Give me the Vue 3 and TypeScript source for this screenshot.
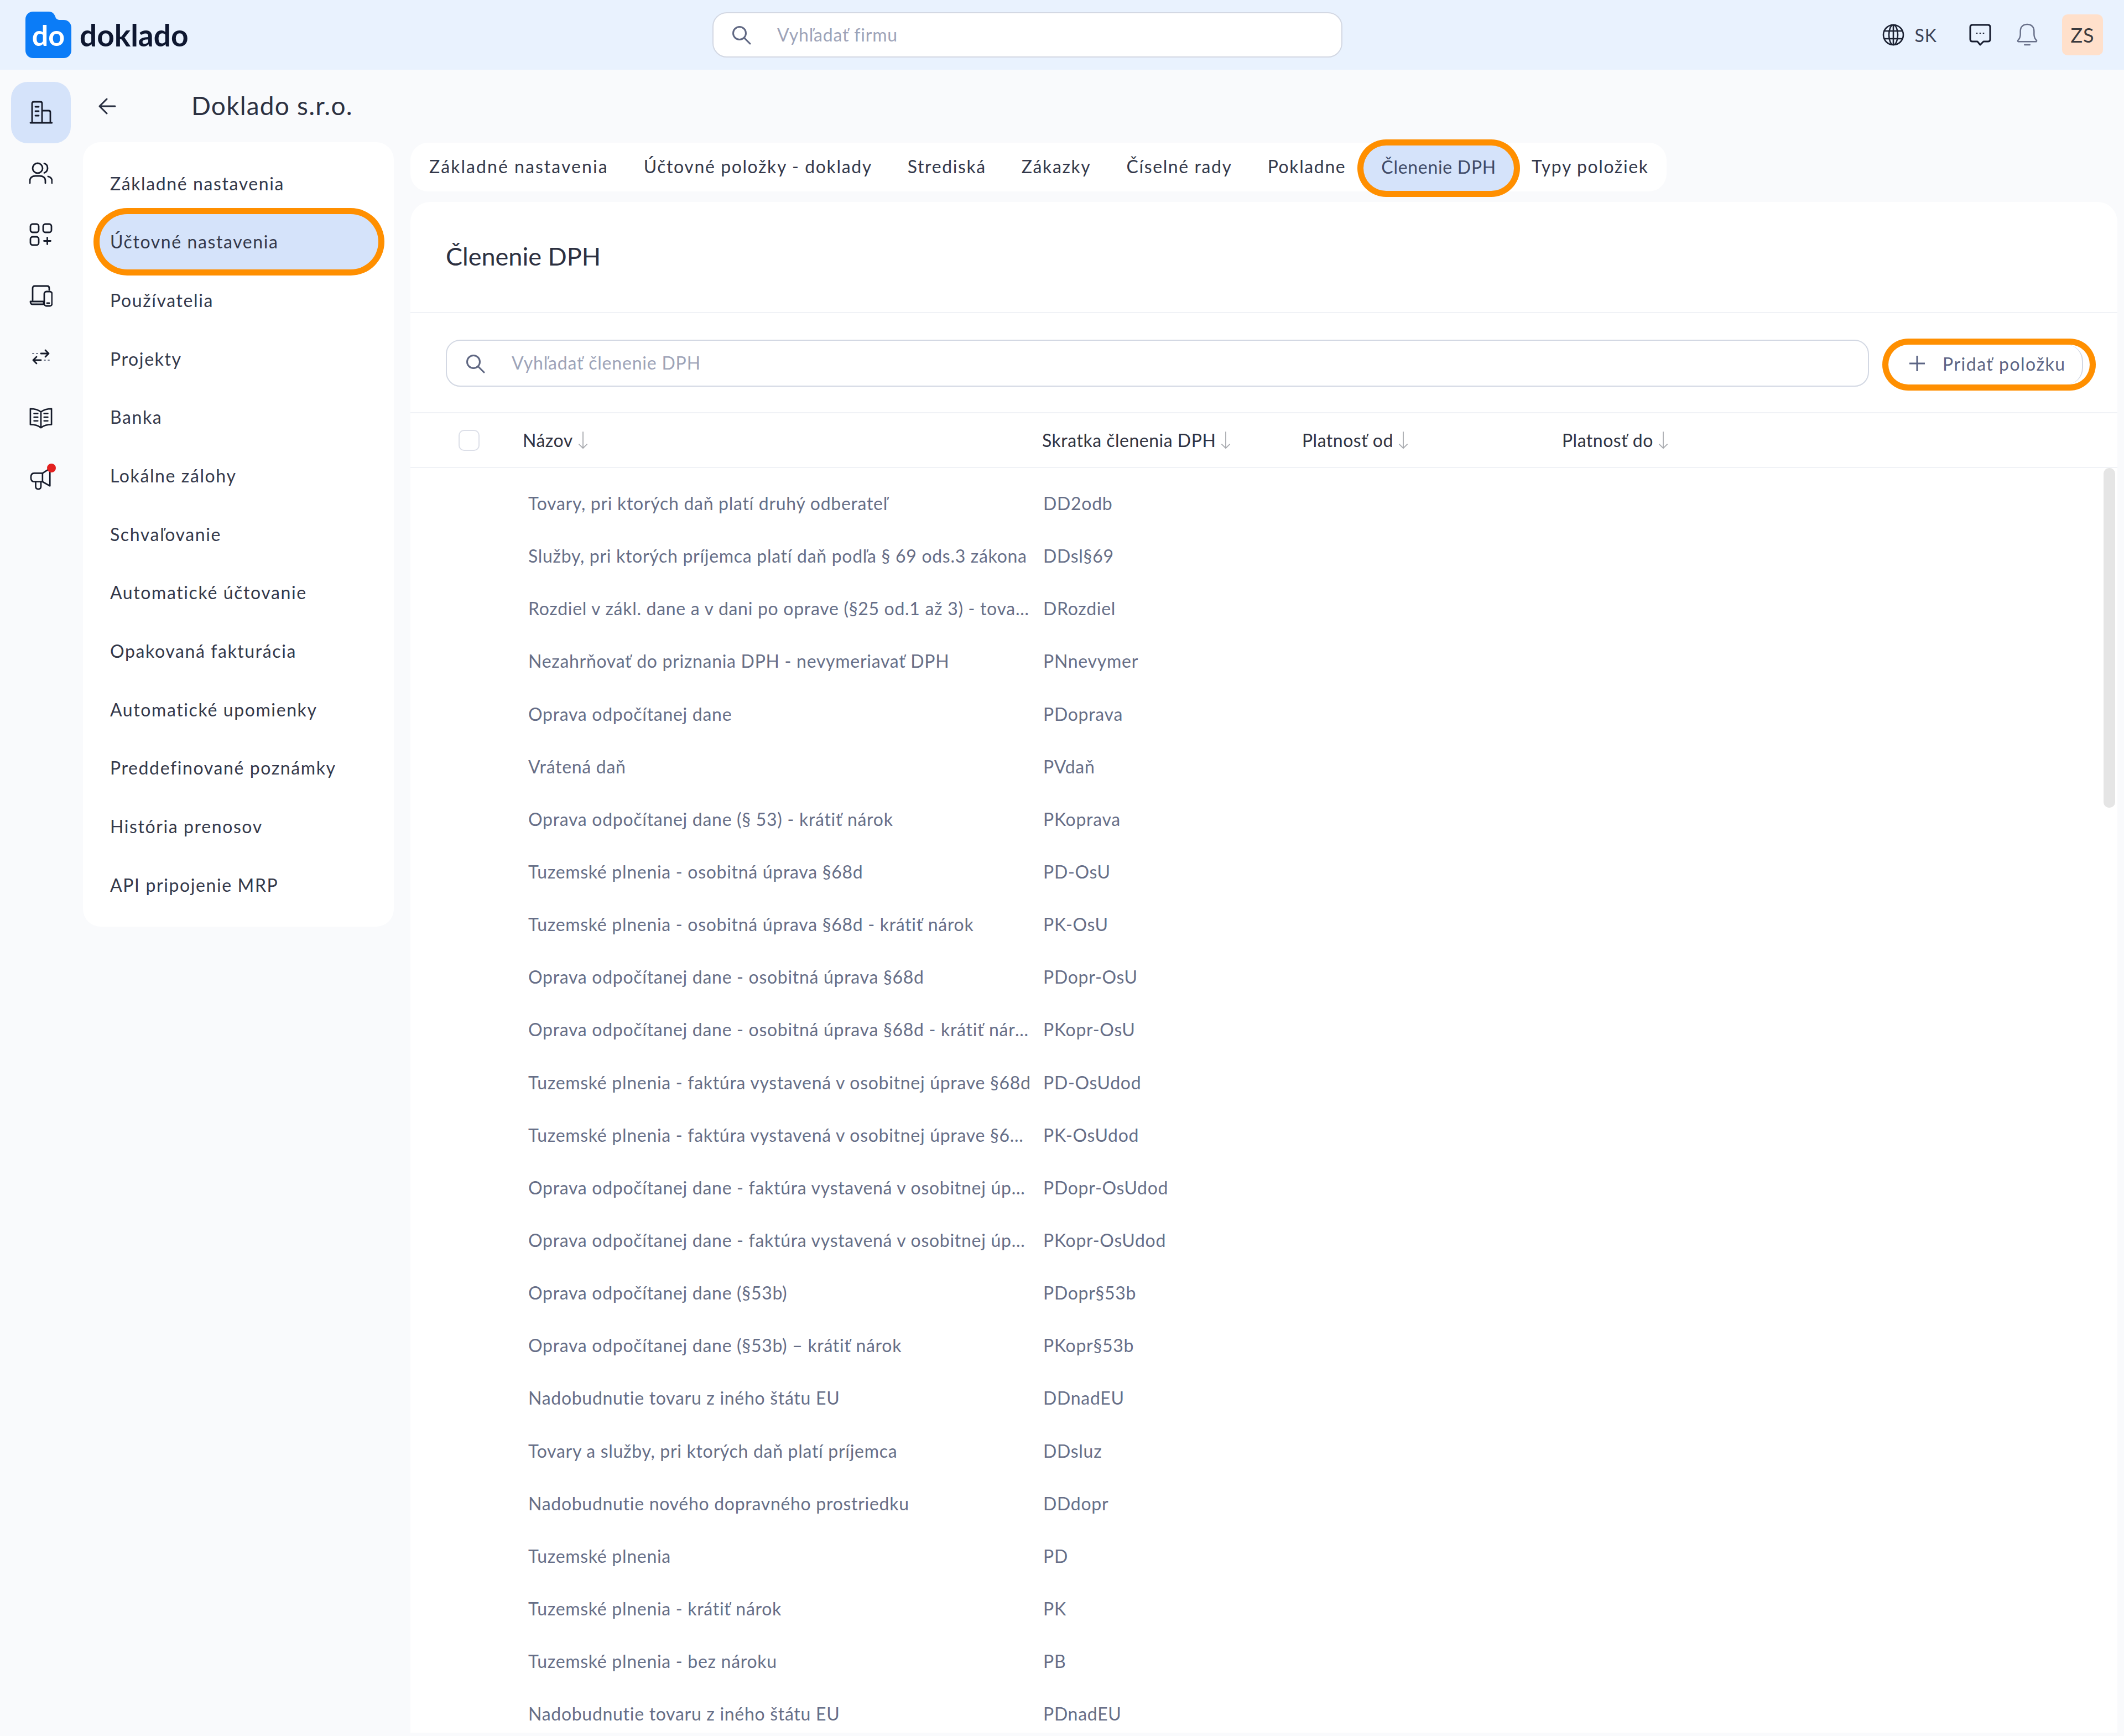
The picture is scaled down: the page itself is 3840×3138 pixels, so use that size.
<script setup lang="ts">
const sideItems = [
  'Základné nastavenia',
  'Účtovné nastavenia',
  'Používatelia',
  'Projekty',
  'Banka',
  'Lokálne zálohy',
  'Schvaľovanie',
  'Automatické účtovanie',
  'Opakovaná fakturácia',
  'Automatické upomienky',
  'Preddefinované poznámky',
  'História prenosov',
  'API pripojenie MRP',
]

const tabs = [
  'Základné nastavenia',
  'Účtovné položky - doklady',
  'Strediská',
  'Zákazky',
  'Číselné rady',
  'Pokladne',
  'Členenie DPH',
  'Typy položiek',
]

const columns = ['Skratka členenia DPH', 'Platnosť od', 'Platnosť do']

const rows: [string, string][] = [
  ['Tovary, pri ktorých daň platí druhý odberateľ', 'DD2odb'],
  ['Služby, pri ktorých príjemca platí daň podľa § 69 ods.3 zákona', 'DDsl§69'],
  ['Rozdiel v zákl. dane a v dani po oprave (§25 od.1 až 3) - tovary a služby', 'DRozdiel'],
  ['Nezahrňovať do priznania DPH - nevymeriavať DPH', 'PNnevymer'],
  ['Oprava odpočítanej dane', 'PDoprava'],
  ['Vrátená daň', 'PVdaň'],
  ['Oprava odpočítanej dane (§ 53) - krátiť nárok', 'PKoprava'],
  ['Tuzemské plnenia - osobitná úprava §68d', 'PD-OsU'],
  ['Tuzemské plnenia - osobitná úprava §68d - krátiť nárok', 'PK-OsU'],
  ['Oprava odpočítanej dane - osobitná úprava §68d', 'PDopr-OsU'],
  ['Oprava odpočítanej dane - osobitná úprava §68d - krátiť nárok', 'PKopr-OsU'],
  ['Tuzemské plnenia - faktúra vystavená v osobitnej úprave §68d', 'PD-OsUdod'],
  ['Tuzemské plnenia - faktúra vystavená v osobitnej úprave §68d - krátiť nárok', 'PK-OsUdod'],
  ['Oprava odpočítanej dane - faktúra vystavená v osobitnej úprave §68d', 'PDopr-OsUdod'],
  ['Oprava odpočítanej dane - faktúra vystavená v osobitnej úprave §68d - krátiť nárok', 'PKopr-OsUdod'],
  ['Oprava odpočítanej dane (§53b)', 'PDopr§53b'],
  ['Oprava odpočítanej dane (§53b) – krátiť nárok', 'PKopr§53b'],
  ['Nadobudnutie tovaru z iného štátu EU', 'DDnadEU'],
  ['Tovary a služby, pri ktorých daň platí príjemca', 'DDsluz'],
  ['Nadobudnutie nového dopravného prostriedku', 'DDdopr'],
  ['Tuzemské plnenia', 'PD'],
  ['Tuzemské plnenia - krátiť nárok', 'PK'],
  ['Tuzemské plnenia - bez nároku', 'PB'],
  ['Nadobudnutie tovaru z iného štátu EU', 'PDnadEU'],
]
</script>

<template>
  <div class="page">
    <header class="topbar">
      <div class="brand">
        <div class="logo">
          <svg class="logo-shape" viewBox="0 0 83 84">
            <path d="M14 0H42C49 0 52 4 54 9C55 13 58 15 63 15H69C77 15 83 21 83 29V70C83 78 77 84 69 84H14C6 84 0 78 0 70V14C0 6 6 0 14 0Z" fill="#0b7cf7" />
          </svg>
          <span class="logo-do">do</span>
        </div>
        <span class="logo-name">doklado</span>
      </div>
      <div class="top-search">
        <svg class="search-icon" viewBox="0 0 36 36">
          <circle cx="15" cy="15" r="11.5" />
          <path d="M23.5 23.5L34 34" />
        </svg>
        <span class="top-placeholder">Vyhľadať firmu</span>
      </div>
      <div class="top-actions">
        <svg class="globe" viewBox="0 0 40 40">
          <circle cx="20" cy="20" r="18" />
          <ellipse cx="20" cy="20" rx="8" ry="18" />
          <path d="M3.5 13H36.5M3.5 27H36.5M20 2V38" />
        </svg>
        <span class="lang">SK</span>
        <svg class="chat" viewBox="0 0 40 40">
          <path d="M6 2H34C36.5 2 38 3.5 38 6V28C38 30.5 36.5 32 34 32H26L20 38L15 32H6C3.5 32 2 30.5 2 28V6C2 3.5 3.5 2 6 2Z" />
          <path class="dots" d="M13.5 17H14.5M19.5 17H20.5M25.5 17H26.5" />
        </svg>
        <svg class="bell" viewBox="0 0 40 44">
          <path d="M2 33C5 30 7 27 7 21V15C7 7 12 2 20 2C28 2 33 7 33 15V21C33 27 35 30 38 33C38 34 37 35 36 35H4C3 35 2 34 2 33Z" />
          <path d="M15 41H25" />
        </svg>
        <div class="avatar">ZS</div>
      </div>
    </header>

    <div class="body">
      <nav class="rail">
        <div class="rail-item rail-active">
          <svg viewBox="0 0 42 42">
            <path d="M2 40H41M5 40V5C5 3 6 2 8 2H20C22 2 23 3 23 5V40M23 18H35C37 18 38 19 38 21V40" />
            <path d="M11 11H17M11 19H17M11 27H17" />
          </svg>
        </div>
        <div class="rail-item">
          <svg viewBox="0 0 42 42">
            <circle cx="15" cy="11" r="9" />
            <path d="M27 2.5C31 3.5 33 7 33 11C33 15 31 18 27 19.5" />
            <path d="M1 38V34C1 28 5 25 11 25H19C25 25 29 28 29 34V38" />
            <path d="M34 26C38 27 41 30 41 34V38" />
          </svg>
        </div>
        <div class="rail-item">
          <svg viewBox="0 0 42 42">
            <rect x="2" y="2" width="15" height="15" rx="4" />
            <rect x="25" y="2" width="15" height="15" rx="4" />
            <rect x="2" y="25" width="15" height="15" rx="4" />
            <path d="M32.5 26.5V38.5M26.5 32.5H38.5" />
          </svg>
        </div>
        <div class="rail-item">
          <svg viewBox="0 0 42 40">
            <path d="M6 28V6C6 3.5 7.5 2 10 2H32C34.5 2 36 3.5 36 6V9" />
            <path d="M2 30H26V35H5C3 35 2 33 2 30Z" />
            <rect x="27" y="12" width="14" height="26" rx="4" fill="#f9fafc" />
            <path d="M32 33H36" />
          </svg>
        </div>
        <div class="rail-item">
          <svg class="swap" viewBox="0 0 34 28">
            <path class="thin" d="M2 8H4M9 8H11" />
            <path d="M17 8H31M25 2L31 8L25 14" />
            <path class="thin" d="M32 20H30M25 20H23" />
            <path d="M17 20H3M9 14L3 20L9 26" />
          </svg>
        </div>
        <div class="rail-item">
          <svg viewBox="0 0 44 40">
            <path d="M22 8C17 4 10 2 2 2V32C10 32 17 34 22 38C27 34 34 32 42 32V2C34 2 27 4 22 8ZM22 8V38" />
            <path d="M9 11H16M9 18H16M9 25H16M28 11H35M28 18H35M28 25H35" />
          </svg>
        </div>
        <div class="rail-item">
          <div class="horn">
            <svg viewBox="0 0 42 44">
              <path d="M8 12H24L38 3V36L24 28H8C4 28 2 25 2 20C2 15 4 12 8 12Z" />
              <path d="M24 12V28" />
              <path d="M11 28V37C11 40 13 42 16 42C19 42 21 40 21 37V28" />
            </svg>
            <span class="horn-dot"></span>
          </div>
        </div>
      </nav>

      <div class="content">
        <div class="company">
          <svg class="back" viewBox="0 0 32 30">
            <path d="M30 15H3M15 2L2 15L15 28" />
          </svg>
          <h1>Doklado s.r.o.</h1>
        </div>

        <div class="columns">
          <aside class="side">
            <div
              v-for="item in sideItems"
              :key="item"
              class="side-item"
              :class="{ marked: item === 'Účtovné nastavenia' }"
            >{{ item }}</div>
          </aside>

          <main class="main">
            <div class="tabs">
              <div
                v-for="tab in tabs"
                :key="tab"
                class="tab"
                :class="{ marked: tab === 'Členenie DPH' }"
              >{{ tab }}</div>
            </div>

            <section class="card">
              <h2>Členenie DPH</h2>
              <div class="toolbar">
                <div class="table-search">
                  <svg class="search-icon" viewBox="0 0 36 36">
                    <circle cx="15" cy="15" r="11.5" />
                    <path d="M23.5 23.5L34 34" />
                  </svg>
                  <span class="table-placeholder">Vyhľadať členenie DPH</span>
                </div>
                <button class="add" type="button">
                  <svg viewBox="0 0 28 28"><path d="M14 0V28M0 14H28" /></svg>
                  Pridať položku
                </button>
              </div>

              <div class="thead">
                <span class="check"></span>
                <span class="th th-name">Názov<svg viewBox="0 0 20 36"><path d="M10 1V34M2 26L10 34L18 26" /></svg></span>
                <span v-for="c in columns" :key="c" class="th">{{ c }}<svg viewBox="0 0 20 36"><path d="M10 1V34M2 26L10 34L18 26" /></svg></span>
              </div>

              <div class="tbody">
                <div v-for="(r, i) in rows" :key="i" class="row">
                  <span class="name">{{ r[0] }}</span>
                  <span class="code">{{ r[1] }}</span>
                </div>
                <div class="thumb"></div>
              </div>
            </section>
          </main>
        </div>
      </div>
    </div>
  </div>
</template>

<style>
html,
body {
  margin: 0;
  background: #f9fafc;
}
</style>

<style scoped>
.page {
  width: 3840px;
  height: 3138px;
  overflow: hidden;
  display: flex;
  flex-direction: column;
  background: #f9fafc;
  font-family: Lato, 'Noto Sans', sans-serif;
  font-size: 32px;
  color: #2c3040;
}

svg {
  fill: none;
  stroke: currentColor;
  stroke-linecap: round;
  stroke-linejoin: round;
  display: block;
}

.topbar {
  height: 126px;
  flex: none;
  display: flex;
  align-items: center;
  background: #e9f2fe;
  padding: 0 38px 0 46px;
}

.brand {
  width: 1242px;
  display: flex;
  align-items: center;
  gap: 15px;
}

.logo {
  position: relative;
  width: 83px;
  height: 84px;
  display: flex;
  align-items: center;
  justify-content: center;
}

.logo-shape {
  position: absolute;
  inset: 0;
  stroke: none;
}

.logo-do {
  position: relative;
  color: #fff;
  font-size: 52px;
  font-weight: 700;
  line-height: 1;
}

.logo-name {
  font-size: 55px;
  font-weight: 700;
  color: #0e1730;
}

.top-search {
  width: 1139px;
  height: 82px;
  box-sizing: border-box;
  display: flex;
  align-items: center;
  background: #fff;
  border: 2px solid #d3d8e3;
  border-radius: 26px;
  padding-left: 32px;
}

.search-icon {
  width: 36px;
  height: 36px;
  stroke-width: 3;
  color: #5f6782;
  flex: none;
}

.top-placeholder {
  margin-left: 47px;
  padding-bottom: 2px;
  color: #9da3b8;
  letter-spacing: 0.8px;
}

.top-actions {
  margin-left: auto;
  display: flex;
  align-items: center;
}

.globe {
  width: 40px;
  height: 40px;
  stroke-width: 2.6;
  margin-left: 2px;
  color: #1c2233;
}

.lang {
  margin-left: 18px;
  color: #3a4155;
  letter-spacing: 1px;
}

.chat {
  width: 40px;
  height: 40px;
  stroke-width: 3;
  margin-left: 58px;
  color: #161c2e;
}

.chat .dots {
  stroke-width: 2;
}

.bell {
  width: 38px;
  height: 42px;
  stroke-width: 2.6;
  margin-left: 46px;
  color: #687089;
}

.avatar {
  width: 74px;
  height: 74px;
  margin-left: 44px;
  border-radius: 10px;
  background: #ffe0cb;
  display: flex;
  align-items: center;
  justify-content: center;
  font-size: 36px;
  color: #3a3a3e;
  letter-spacing: 1px;
}

.body {
  flex: 1;
  min-height: 0;
  display: flex;
  padding-top: 22px;
  padding-bottom: 6px;
}

.rail {
  width: 150px;
  flex: none;
  padding-left: 20px;
  box-sizing: border-box;
}

.rail-item {
  width: 108px;
  height: 110.5px;
  display: flex;
  align-items: center;
  justify-content: center;
  color: #151a29;
}

.rail-item svg {
  width: 42px;
  height: 42px;
  stroke-width: 2.8;
}

.rail-item .swap {
  width: 34px;
  height: 28px;
}

.rail-item .thin {
  stroke-width: 2;
  stroke: #6b7285;
}

.rail-active {
  background: #d5e3fa;
  border-radius: 30px;
}

.horn {
  position: relative;
  width: 42px;
  height: 44px;
}

.horn-dot {
  position: absolute;
  top: -6px;
  right: -6px;
  width: 16px;
  height: 16px;
  border-radius: 50%;
  background: #e3201f;
}

.content {
  flex: 1;
  min-width: 0;
  display: flex;
  flex-direction: column;
}

.company {
  height: 109px;
  flex: none;
  display: flex;
  align-items: flex-start;
  padding: 29px 0 0 28px;
  box-sizing: border-box;
}

.back {
  width: 32px;
  height: 30px;
  stroke-width: 3;
  color: #2a3042;
}

.company h1 {
  margin: -16px 0 0 136px;
  font-size: 46px;
  font-weight: 400;
  color: #2c3040;
  letter-spacing: 1.2px;
  line-height: 60px;
}

.columns {
  flex: 1;
  min-height: 0;
  display: flex;
}

.side {
  width: 562px;
  height: 1418px;
  flex: none;
  box-sizing: border-box;
  background: #fff;
  border-radius: 32px;
  padding: 24px 28px 0 30px;
  display: flex;
  flex-direction: column;
  gap: 5.7px;
}

.side-item {
  height: 100px;
  flex: none;
  display: flex;
  align-items: center;
  padding-left: 19px;
  color: #33384a;
  letter-spacing: 1.6px;
  border-radius: 50px;
}

.marked {
  background: #d5e3fa;
  box-shadow: 0 0 0 11px #ff8f00;
}

.main {
  flex: 1;
  min-width: 0;
  margin: 0 12px 0 30px;
  display: flex;
  flex-direction: column;
}

.tabs {
  align-self: flex-start;
  height: 88px;
  flex: none;
  margin-top: 1px;
  display: flex;
  background: #fff;
  border-radius: 32px;
  padding: 0 0 0 2px;
}

.tab {
  padding: 0 32px 4px;
  display: flex;
  align-items: center;
  color: #33384a;
  letter-spacing: 1.6px;
  border-radius: 44px;
  white-space: nowrap;
}

.tab:first-child {
  letter-spacing: 2.05px;
}

.tab.marked {
  box-sizing: border-box;
  height: 82px;
  margin-top: 5px;
  padding-bottom: 5px;
  color: #3f4a66;
  letter-spacing: 0.7px;
}

.card {
  flex: 1;
  min-height: 0;
  margin-top: 19px;
  background: #fff;
  border-radius: 36px 36px 0 0;
  display: flex;
  flex-direction: column;
  overflow: hidden;
}

.card h2 {
  height: 201px;
  flex: none;
  box-sizing: border-box;
  margin: 0;
  padding: 70px 0 0 64px;
  font-size: 45px;
  font-weight: 400;
  line-height: 56px;
  color: #2c3040;
  border-bottom: 2px solid #f0f2f6;
}

.toolbar {
  height: 181px;
  flex: none;
  box-sizing: border-box;
  display: flex;
  padding: 48px 0 0 64px;
  border-bottom: 2px solid #f0f2f6;
}

.table-search {
  width: 2573px;
  height: 85px;
  box-sizing: border-box;
  display: flex;
  align-items: center;
  border: 2px solid #d3d8e3;
  border-radius: 26px;
  padding-left: 33px;
}

.table-placeholder {
  margin-left: 48px;
  padding-bottom: 2px;
  color: #9da3b8;
  letter-spacing: 0.8px;
}

.add {
  position: relative;
  width: 364px;
  height: 72px;
  margin: 9px 0 0 35px;
  box-sizing: border-box;
  display: flex;
  align-items: center;
  gap: 32px;
  padding: 0 0 4px 38px;
  background: #fff;
  border: 0;
  border-radius: 36px;
  box-shadow: 0 0 0 11px #ff8f00;
  font: inherit;
  color: #5b6484;
  letter-spacing: 1.5px;
}

/* the button's own edge shows just inside the marker ring */
.add::after {
  content: '';
  position: absolute;
  top: 0;
  bottom: 0;
  right: 12px;
  width: 40px;
  border-right: 2px solid #d3d8e3;
  border-radius: 0 30px 30px 0;
}

.add svg {
  width: 28px;
  height: 28px;
  stroke-width: 3;
  stroke-linecap: butt;
}

.thead {
  height: 99px;
  flex: none;
  box-sizing: border-box;
  display: flex;
  align-items: center;
  padding-left: 87px;
  border-bottom: 2px solid #f0f2f6;
}

.check {
  width: 38px;
  height: 38px;
  flex: none;
  box-sizing: border-box;
  border: 2px solid #dcdfe8;
  border-radius: 10px;
  background: #fff;
}

.th {
  width: 470px;
  flex: none;
  display: flex;
  align-items: center;
  gap: 8px;
  color: #2f3342;
  letter-spacing: 0.5px;
  white-space: nowrap;
}

.th-name {
  width: 939px;
  margin-left: 78px;
}

.th svg {
  width: 20px;
  height: 32px;
  stroke-width: 2;
  color: #a7a9ae;
}

.tbody {
  position: relative;
  flex: 1;
  min-height: 0;
  padding-top: 16px;
}

.row {
  height: 95.15px;
  display: flex;
  align-items: center;
  padding-left: 213px;
  color: #666e87;
  letter-spacing: 0.7px;
}

.name {
  width: 909px;
  flex: none;
  overflow: hidden;
  white-space: nowrap;
  text-overflow: ellipsis;
}

.code {
  margin-left: 22px;
}

.thumb {
  position: absolute;
  top: 0;
  right: 4px;
  width: 21px;
  height: 614px;
  border-radius: 10px;
  background: #e5e5e5;
}
</style>
